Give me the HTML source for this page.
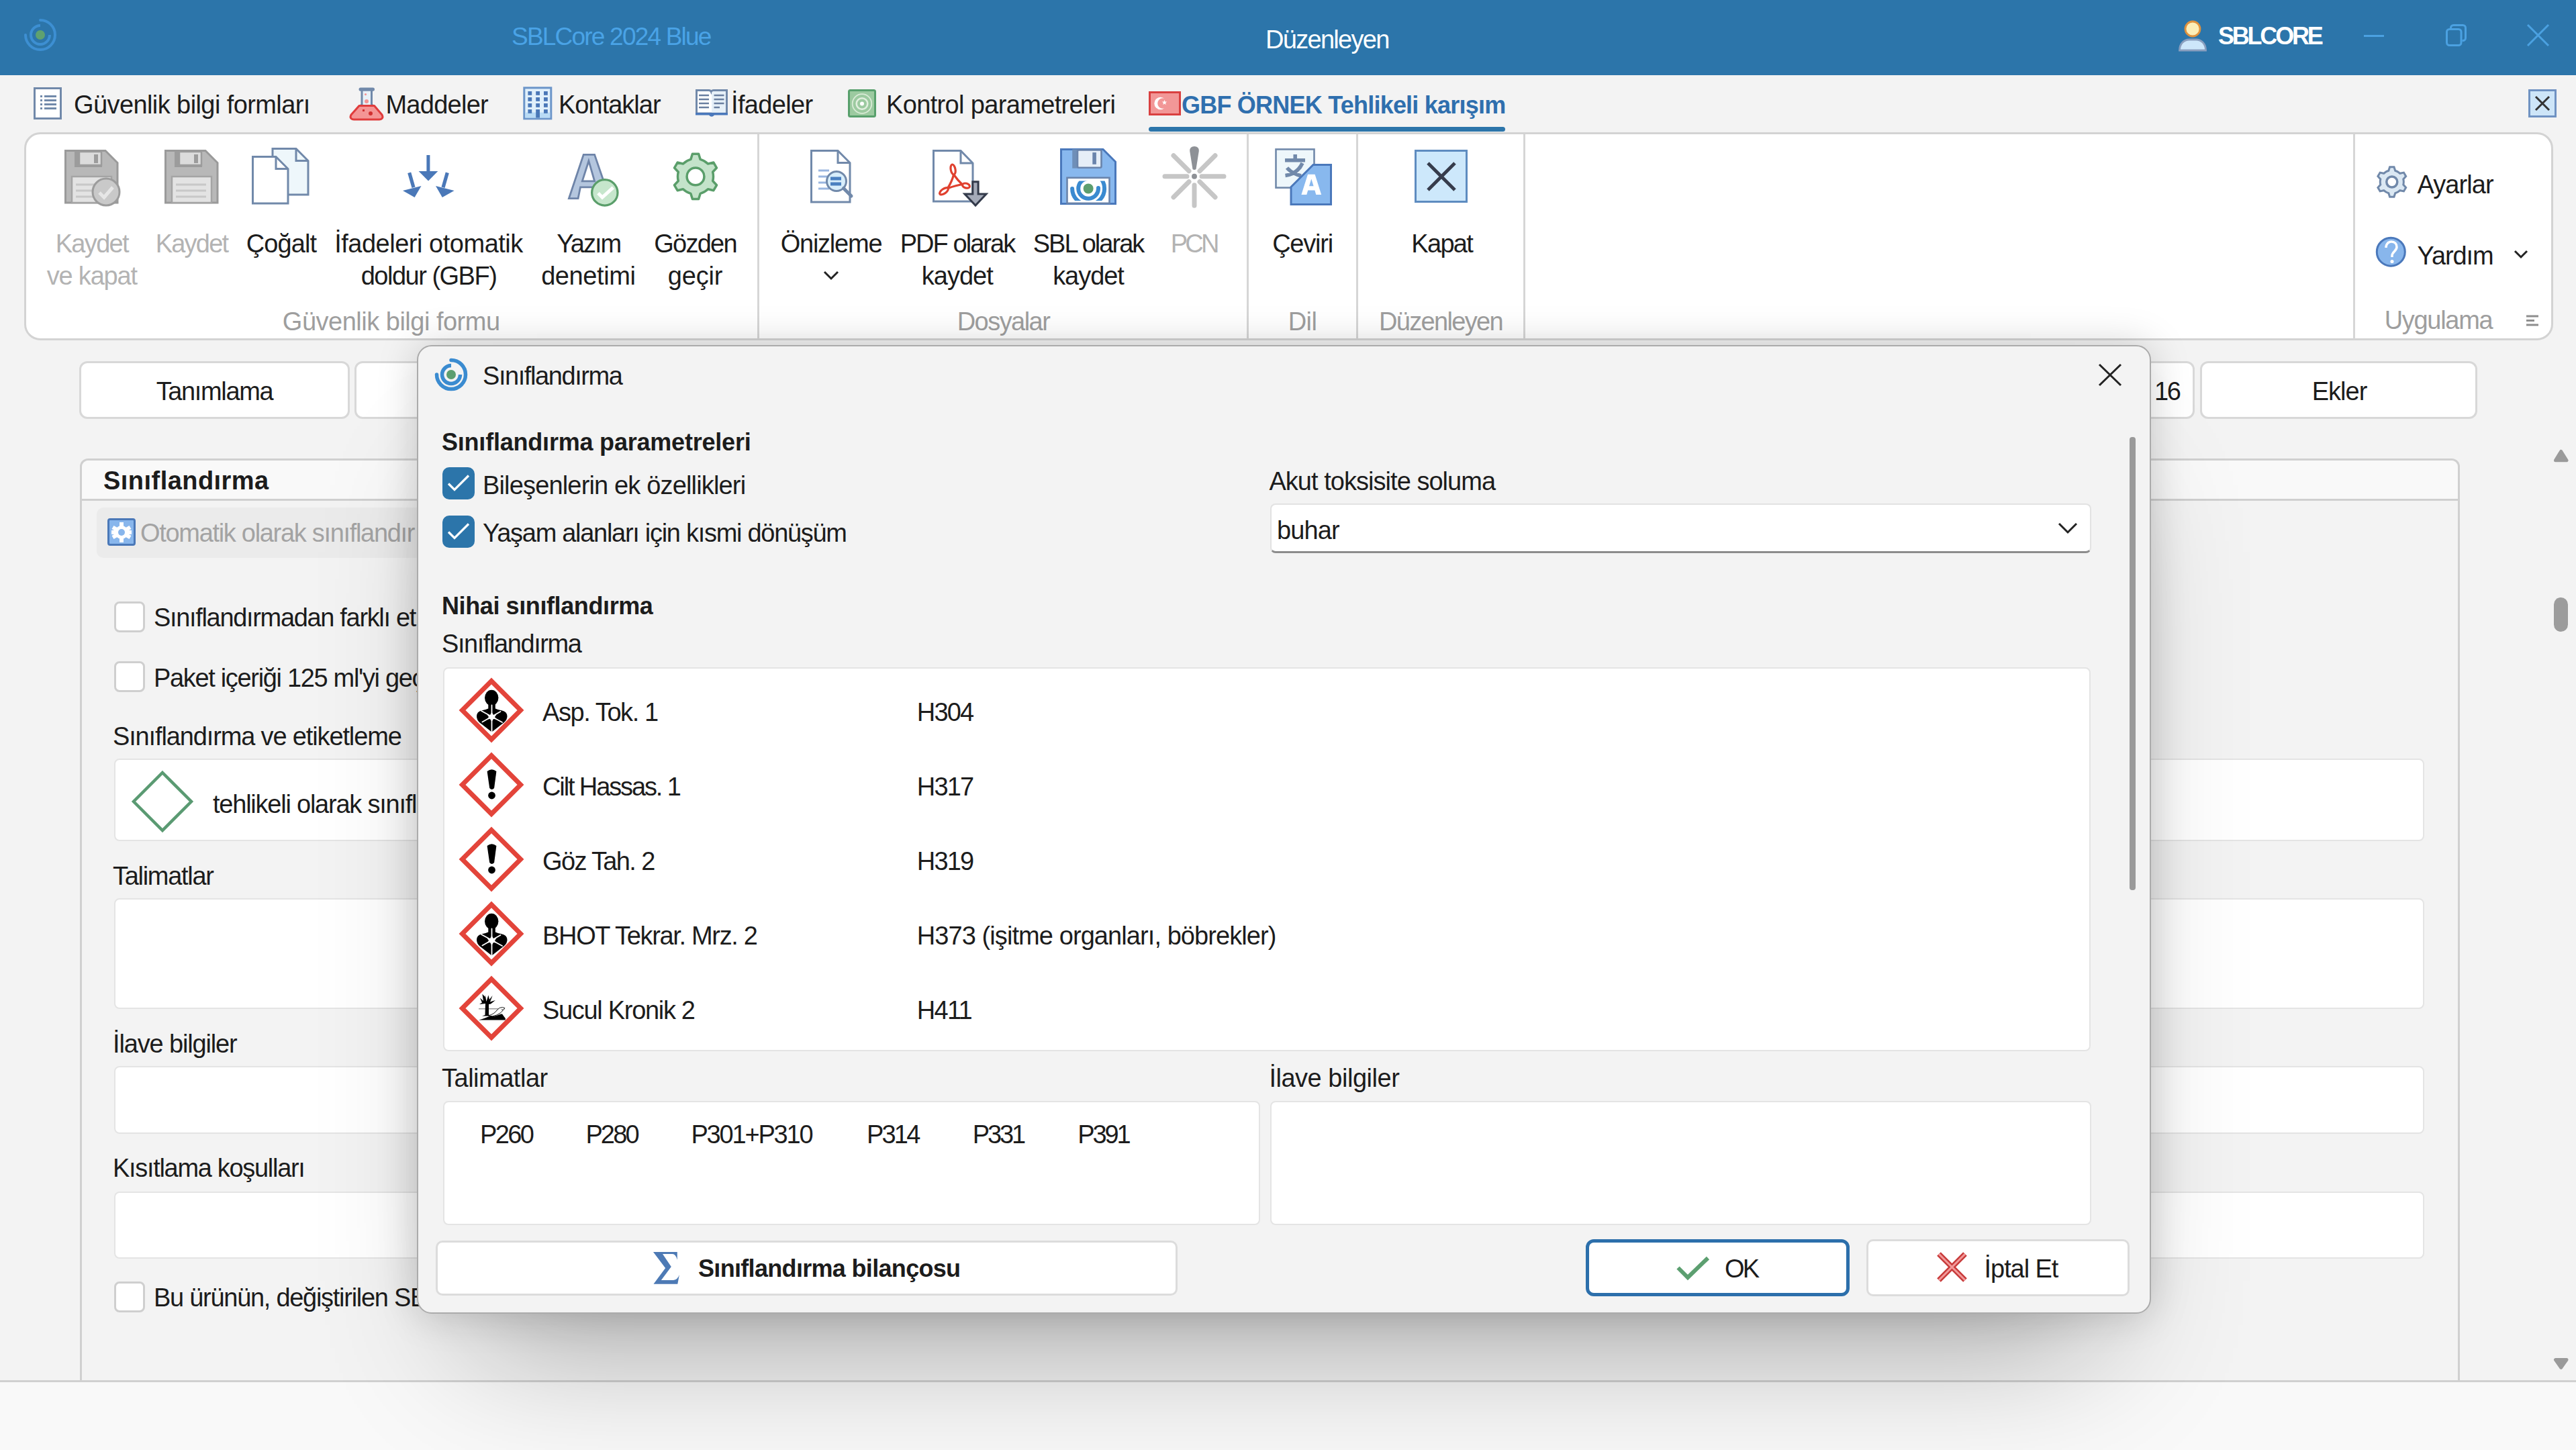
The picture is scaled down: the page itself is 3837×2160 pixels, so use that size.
<!DOCTYPE html>
<html><head><meta charset="utf-8"><title>SBLCore</title>
<style>
*{margin:0;padding:0;box-sizing:border-box}
html,body{width:3837px;height:2160px;overflow:hidden;background:#f3f3f3;font-family:"Liberation Sans",sans-serif;position:relative}
.a{position:absolute}
.t{position:absolute;white-space:pre;line-height:1;font-family:"Liberation Sans",sans-serif}
svg{position:absolute;overflow:visible}
.box{position:absolute;background:#fff;border:2px solid #e4e4e4;border-radius:8px}
.sep{position:absolute;top:200px;width:3px;height:305px;background:#d6d6d6}
</style></head><body>

<!-- ===== TITLE BAR ===== -->
<div class="a" style="left:0;top:0;width:3837px;height:112px;background:#2c75aa"></div>
<svg style="left:0;top:0" width="120" height="112" viewBox="0 0 120 112">
  <path d="M60 30 A22 22 0 1 1 38 52" fill="none" stroke="#3d8fd2" stroke-width="4" stroke-linecap="round"/>
  <path d="M60 38 A14 14 0 1 0 74 52" fill="none" stroke="#3d8fd2" stroke-width="4" stroke-linecap="butt"/>
  <circle cx="60" cy="52" r="7" fill="#5fa170"/>
</svg>
<!-- user icon -->
<svg style="left:3240px;top:28px" width="52" height="52" viewBox="0 0 52 52">
  <circle cx="26" cy="15" r="11" fill="#fdeeb8" stroke="#e0923e" stroke-width="2.8"/>
  <path d="M6.5 47 C6.5 37 13 31 21 31 H31 C39 31 45.5 37 45.5 47 Z" fill="#cde7fb" stroke="#8a9fbf" stroke-width="2.8"/>
</svg>
<!-- window controls -->
<div class="a" style="left:3521px;top:52px;width:30px;height:3px;background:#4ba1e1"></div>
<svg style="left:3640px;top:34px" width="40" height="40" viewBox="0 0 40 40">
  <rect x="4.5" y="9.5" width="21.5" height="24" rx="4" fill="none" stroke="#4ba1e1" stroke-width="3"/>
  <path d="M10.5 8.5 V7.5 a4 4 0 0 1 4-4 H28.5 a4 4 0 0 1 4 4 V22.5 a4 4 0 0 1 -4 4 H27.5" fill="none" stroke="#4ba1e1" stroke-width="3"/>
</svg>
<svg style="left:3762px;top:34px" width="40" height="40" viewBox="0 0 40 40">
  <path d="M3 3 L34 34 M34 3 L3 34" stroke="#4ba1e1" stroke-width="3" fill="none"/>
</svg>

<!-- ===== TAB ROW ===== -->
<svg style="left:50px;top:130px" width="44" height="50" viewBox="0 0 44 50">
  <rect x="1.5" y="1.5" width="39" height="45" fill="#fff" stroke="#7189aa" stroke-width="3"/>
  <g fill="#7189aa"><rect x="10" y="12" width="3" height="3"/><rect x="10" y="18" width="3" height="3"/><rect x="10" y="24" width="3" height="3"/><rect x="10" y="30" width="3" height="3"/>
  <rect x="16" y="12" width="18" height="3"/><rect x="16" y="18" width="18" height="3"/><rect x="16" y="24" width="18" height="3"/><rect x="16" y="30" width="18" height="3"/></g>
</svg>
<svg style="left:521px;top:130px" width="50" height="50" viewBox="0 0 50 50">
  <path d="M13.5 3 Q13.5 0.5 16 0.5 H34.5 Q37 0.5 37 3 Q37 5.7 34.5 5.7 H34 V25 L37 27.5 H13.5 L16.5 25 V5.7 H16 Q13.5 5.7 13.5 3 Z" fill="#7189aa"/>
  <rect x="19.5" y="5.7" width="11.5" height="21.5" fill="#e8f1f8"/>
  <circle cx="23.5" cy="10.6" r="1.6" fill="#f49595"/><circle cx="25" cy="21" r="3" fill="#f49595"/>
  <path d="M14 27.5 H36.5 L48 41 Q50 44.5 48 46.5 Q46.5 48 44 48 H6 Q3.5 48 2 46.5 Q0 44.5 2 41 Z" fill="#f49595" stroke="#e03c3c" stroke-width="3" stroke-linejoin="round"/>
  <rect x="19" y="33" width="3" height="3" fill="#d03030"/><circle cx="31" cy="39" r="3" fill="#d03030"/>
</svg>
<svg style="left:779px;top:129px" width="44" height="50" viewBox="0 0 44 50">
  <rect x="1.8" y="1.8" width="40" height="46" fill="#e0f0fb" stroke="#6b95c9" stroke-width="3"/>
  <rect x="3.3" y="38.5" width="37" height="8" fill="#b9dbf5"/>
  <g fill="#4a78b8"><rect x="7.4" y="7" width="5.8" height="5.8"/><rect x="19.2" y="7" width="5.8" height="5.8"/><rect x="31" y="7" width="5.8" height="5.8"/>
  <rect x="7.4" y="16" width="5.8" height="5.8"/><rect x="19.2" y="16" width="5.8" height="5.8"/><rect x="31" y="16" width="5.8" height="5.8"/>
  <rect x="7.4" y="25" width="5.8" height="5.8"/><rect x="19.2" y="25" width="5.8" height="5.8"/><rect x="31" y="25" width="5.8" height="5.8"/>
  <rect x="7.4" y="34" width="5.8" height="5.8"/><rect x="19.2" y="34" width="5.8" height="12.5"/><rect x="31" y="34" width="5.8" height="5.8"/></g>
</svg>
<svg style="left:1035px;top:132px" width="50" height="44" viewBox="0 0 50 44">
  <path d="M2.5 2.5 H21 Q23.5 2.5 24.5 5 Q25.5 2.5 28 2.5 H47.5 V37 H2.5 Z" fill="#fff" stroke="#7189aa" stroke-width="3"/>
  <path d="M25 6 Q26 4 28 4 H46 V35.5 H25 Z" fill="#e6f0f8"/>
  <path d="M1 36 H49 V39.5 H29 Q25 44 21 39.5 H1 Z" fill="#4a78bb"/>
  <g stroke="#6a7fa0" stroke-width="2.6"><path d="M6 10 H21 M6 16 H21 M6 22 H21 M6 28 H21 M28.5 10 H43.5 M28.5 16 H43.5 M28.5 22 H43.5 M28.5 28 H37"/></g>
</svg>
<svg style="left:1263px;top:133px" width="42" height="42" viewBox="0 0 42 42">
  <rect x="1.5" y="1.5" width="39" height="39" rx="2" fill="#9ccaa0" stroke="#58a06c" stroke-width="3"/>
  <circle cx="21" cy="21.5" r="14.3" fill="none" stroke="#eef6e8" stroke-width="1.8" opacity="0.75"/><circle cx="21" cy="21.5" r="8.3" fill="none" stroke="#f2f8ee" stroke-width="2.6" opacity="0.8"/><circle cx="21" cy="21.5" r="3" fill="#fff"/>
</svg>
<svg style="left:1711px;top:136px" width="48" height="36" viewBox="0 0 48 36">
  <rect x="1.5" y="1.5" width="45" height="33" fill="#f29797" stroke="#d94040" stroke-width="3"/>
  <circle cx="17.5" cy="18" r="9.2" fill="#fff"/><circle cx="21" cy="18" r="7.8" fill="#f29797"/>
  <path d="M23.5 12.8 l1 2.6 2.7 0.2 -2.1 1.7 0.7 2.7 -2.3-1.5 -2.3 1.5 0.7-2.7 -2.1-1.7 2.7-0.2z" fill="#fff"/>
</svg>
<div class="a" style="left:1711px;top:189px;width:531px;height:7px;border-radius:4px;background:#2c75aa"></div>
<!-- tab close -->
<div class="a" style="left:3766px;top:133px;width:42px;height:42px;background:#cde5f8;border:3px solid #6f92c2"></div>
<svg style="left:3766px;top:133px" width="42" height="42" viewBox="0 0 42 42">
  <path d="M11 11 L31 31 M31 11 L11 31" stroke="#333" stroke-width="3"/>
</svg>

<!-- ===== RIBBON ===== -->
<div class="a" style="left:36px;top:197px;width:3767px;height:310px;background:#fff;border:3px solid #d3d3d3;border-radius:24px"></div>
<div class="sep" style="left:1128px"></div>
<div class="sep" style="left:1857px"></div>
<div class="sep" style="left:2020px"></div>
<div class="sep" style="left:2269px"></div>
<div class="sep" style="left:3505px"></div>
<!-- Kaydet ve kapat -->
<svg style="left:96px;top:223px" width="90" height="90" viewBox="0 0 90 90">
  <path d="M1.5 1.5 H61 L79 19.5 V79 H1.5 Z" fill="#b8b8b8" stroke="#9a9a9a" stroke-width="3"/>
  <rect x="15" y="3" width="41" height="23" fill="#9c9c9c"/><rect x="22" y="3" width="33" height="20" fill="#dcdcdc" stroke="#9c9c9c" stroke-width="2.5"/><rect x="44" y="7" width="6" height="13" fill="#9c9c9c"/>
  <rect x="11" y="40" width="59" height="39" fill="#e3e3e3" stroke="#a4a4a4" stroke-width="2.5"/>
  <path d="M17 52 H62 M17 61 H62 M17 70 H62" stroke="#c8c8c8" stroke-width="3"/>
  <circle cx="62" cy="63" r="20" fill="#c9c9c9" stroke="#9c9c9c" stroke-width="3"/>
  <path d="M52 64 L59 71 L72 56" fill="none" stroke="#e6e6e6" stroke-width="5"/>
</svg>
<!-- Kaydet -->
<svg style="left:245px;top:223px" width="90" height="90" viewBox="0 0 90 90">
  <path d="M1.5 1.5 H61 L79 19.5 V79 H1.5 Z" fill="#b8b8b8" stroke="#9a9a9a" stroke-width="3"/>
  <rect x="15" y="3" width="41" height="23" fill="#9c9c9c"/><rect x="22" y="3" width="33" height="20" fill="#dcdcdc" stroke="#9c9c9c" stroke-width="2.5"/><rect x="44" y="7" width="6" height="13" fill="#9c9c9c"/>
  <rect x="11" y="40" width="59" height="39" fill="#e3e3e3" stroke="#a4a4a4" stroke-width="2.5"/>
  <path d="M17 52 H62 M17 61 H62 M17 70 H62" stroke="#c8c8c8" stroke-width="3"/>
</svg>
<!-- Cogalt -->
<svg style="left:375px;top:220px" width="90" height="90" viewBox="0 0 90 90">
  <path d="M31 1.5 H66 L84 19.5 V70 H31 Z" fill="#eef7fb" stroke="#7189aa" stroke-width="3"/>
  <path d="M66 1.5 V19.5 H84" fill="none" stroke="#7189aa" stroke-width="3"/>
  <path d="M1.5 13.5 H36 L54 31.5 V83 H1.5 Z" fill="#fff" stroke="#7189aa" stroke-width="3"/>
  <path d="M36 13.5 V31.5 H54" fill="none" stroke="#7189aa" stroke-width="3"/>
</svg>
<!-- Ifadeleri otomatik doldur -->
<svg style="left:595px;top:228px" width="90" height="72" viewBox="0 0 90 72">
  <g fill="#4a78b8">
    <rect x="40.4" y="3" width="5" height="25"/><path d="M28.6 27 H57.3 L43 41.5 Z"/>
    <path d="M12.2 30 L17.2 28.6 L23.5 50.5 L18.5 52 Z"/><path d="M5 56 L32.5 49 L22.6 66 Z"/>
    <path d="M73.8 30 L68.8 28.6 L62.5 50.5 L67.5 52 Z"/><path d="M81.6 56 L54 49 L63.8 66 Z"/>
  </g>
</svg>
<!-- Yazim denetimi -->
<svg style="left:845px;top:228px" width="82" height="84" viewBox="0 0 82 84">
  <path d="M24.2 2.4 H40.6 L63 67.6 H49 L44.5 50.8 H19.5 L16.1 67.6 H2.4 Z M31.9 11.7 L22.3 41.8 H40.6 Z" fill="#b4c6de" stroke="#6e84a8" stroke-width="2.8" stroke-linejoin="miter"/>
  <circle cx="55.8" cy="58.9" r="19.2" fill="#c6e6cc" stroke="#5a9e6a" stroke-width="3.2"/>
  <path d="M46 59.8 L52.1 66 L68.3 51.3" fill="none" stroke="#fff" stroke-width="5"/>
</svg>
<!-- Gozden gecir gear -->
<svg style="left:995px;top:222px" width="82" height="82" viewBox="0 0 82 82">
  <g transform="translate(41 40.9)">
  <path id="g6" d="M-7.11 -25.53 L-4.59 -33.69 L4.59 -33.69 L7.11 -25.53 A26.5 26.5 0 0 1 18.55 -18.92 L26.88 -20.82 L31.47 -12.87 L25.66 -6.60 A26.5 26.5 0 0 1 25.66 6.60 L31.47 12.87 L26.88 20.82 L18.55 18.92 A26.5 26.5 0 0 1 7.11 25.53 L4.59 33.69 L-4.59 33.69 L-7.11 25.53 A26.5 26.5 0 0 1 -18.55 18.92 L-26.88 20.82 L-31.47 12.87 L-25.66 6.60 A26.5 26.5 0 0 1 -25.66 -6.60 L-31.47 -12.87 L-26.88 -20.82 L-18.55 -18.92 A26.5 26.5 0 0 1 -7.11 -25.53 Z" fill="#c4e3ca" stroke="#5a9e6a" stroke-width="3.5" stroke-linejoin="round"/>
  <circle r="12.9" fill="#fff" stroke="#5a9e6a" stroke-width="3.5"/>
  </g>
</svg>
<!-- Onizleme -->
<svg style="left:1207px;top:223px" width="70" height="82" viewBox="0 0 70 82">
  <path d="M1.5 1.5 H41 L59 19.5 V78 H1.5 Z" fill="#fff" stroke="#7189aa" stroke-width="3"/>
  <path d="M41 1.5 V19.5 H59" fill="none" stroke="#7189aa" stroke-width="3"/>
  <path d="M12 31 H28 M12 40 H26 M12 49 H26 M12 58 H28" stroke="#9ab6e0" stroke-width="3"/>
  <circle cx="39" cy="47" r="14.5" fill="#d8eefb" stroke="#7189aa" stroke-width="3"/>
  <path d="M30 43 H46 M30 51 H46" stroke="#4a80c0" stroke-width="5"/>
  <path d="M49.5 57.5 L61 69" stroke="#7189aa" stroke-width="5" stroke-linecap="round"/>
</svg>
<!-- PDF -->
<svg style="left:1389px;top:223px" width="84" height="88" viewBox="0 0 84 88">
  <path d="M1.5 1.5 H42 L60 20 V77 H1.5 Z" fill="#fff" stroke="#7189aa" stroke-width="3"/>
  <path d="M42 1.5 V20 H60" fill="none" stroke="#7189aa" stroke-width="3"/>
  <g fill="none" stroke="#e0402e" stroke-width="3.2">
    <ellipse cx="30.6" cy="29.5" rx="3.4" ry="7.6" transform="rotate(-10 30.6 29.5)"/>
    <ellipse cx="17" cy="61.8" rx="7.4" ry="3.4" transform="rotate(-35 17 61.8)"/>
    <ellipse cx="50" cy="53.6" rx="5.6" ry="3.4" transform="rotate(15 50 53.6)"/>
    <path d="M31.6 37 C29.5 45 26 52 22.6 57.2 M23 57.5 C31 54.5 38 52.5 45 51.5 M45 52.5 C40 48 35 42 31.6 37"/>
  </g>
  <path d="M59.8 47.7 H68.1 V66 H80 L64 83 L48 66 H59.8 Z" fill="#a4aab8" stroke="#333a4a" stroke-width="3" stroke-linejoin="miter"/>
</svg>
<!-- SBL floppy -->
<svg style="left:1578px;top:220px" width="86" height="86" viewBox="0 0 86 86">
  <defs><clipPath id="sblclip"><rect x="12" y="49.4" width="62" height="29.5"/></clipPath></defs>
  <path d="M2.5 2.5 H65 L83.5 21 V83.5 H2.5 Z" fill="#88b8ee" stroke="#4a78bb" stroke-width="3"/>
  <rect x="19.2" y="2.5" width="10" height="28.2" fill="#6f8fb8"/>
  <rect x="27" y="3.5" width="35.5" height="26.2" rx="2" fill="#e6eef7" stroke="#6a84ab" stroke-width="2.6"/>
  <rect x="49.3" y="7.1" width="5.6" height="17.7" fill="#6a84ab"/>
  <rect x="11.5" y="44.8" width="63" height="38" fill="#fff" stroke="#6a84ab" stroke-width="2.6"/>
  <g clip-path="url(#sblclip)" fill="none" stroke="#3a8ad0" stroke-width="6" stroke-linecap="round">
    <path d="M43.1 36.9 A24 24 0 1 1 19.1 60.9"/>
    <path d="M43.1 46 A14.9 14.9 0 1 0 58 59.9"/>
  </g>
  <circle cx="43.1" cy="60.9" r="7.5" fill="#5c9e6f"/>
</svg>
<!-- PCN -->
<svg style="left:1729px;top:213px" width="100" height="100" viewBox="0 0 100 100">
  <g stroke="#c6c6c6" stroke-width="7" stroke-linecap="round" transform="translate(50 49.7)">
    <path d="M0 13 V43.5 M11 0 H44 M-11 0 H-44"/>
    <path d="M8 8 L31 31 M-8 8 L-31 31 M8 -8 L31 -31 M-8 -8 L-31 -31"/>
  </g>
  <path d="M43.2 12 Q43 5 50 5 Q57 5 56.8 12 L52.5 39 Q50 41 47.5 39 Z" fill="#8e9196"/>
  <circle cx="50" cy="49.7" r="4" fill="#8e9196"/>
</svg>
<!-- Ceviri -->
<svg style="left:1898px;top:220px" width="88" height="88" viewBox="0 0 88 88">
  <rect x="2.5" y="2.4" width="57" height="57.2" fill="#eef7fb" stroke="#7189aa" stroke-width="2.6"/>
  <g stroke="#7189aa" stroke-width="5.5" fill="none"><path d="M16 18.8 H46 M31.2 10 V18.8 M19 30 C25 37 32 40 40 42 M42 23 C37 34 28 40 16.5 41.5"/></g>
  <path d="M25 58.5 L58 25.5 H84.5 V84.5 H25 Z" fill="#88b8ee" stroke="#4a78bb" stroke-width="3"/>
  <path d="M40.4 70.1 L50 39.7 H60.6 L70.2 70.1 H62.3 L60.4 63.5 H50.2 L48.3 70.1 Z M52 57.3 H58.6 L55.3 46.5 Z" fill="#fff" fill-rule="evenodd"/>
</svg>
<!-- Kapat -->
<svg style="left:2107px;top:223px" width="80" height="80" viewBox="0 0 80 80">
  <rect x="1.5" y="1.5" width="76" height="76" fill="#cde8fb" stroke="#5e8cc0" stroke-width="3"/>
  <path d="M20 20 L60 60 M60 20 L20 60" stroke="#363c4c" stroke-width="5"/>
</svg>
<!-- Ayarlar gear -->
<svg style="left:3536px;top:244px" width="54" height="54" viewBox="0 0 54 54">
  <g transform="translate(26.8 27)">
  <path d="M-4.93 -16.79 L-3.19 -22.27 L3.19 -22.27 L4.93 -16.79 A17.5 17.5 0 0 1 12.07 -12.67 L17.69 -13.90 L20.88 -8.37 L17.01 -4.12 A17.5 17.5 0 0 1 17.01 4.12 L20.88 8.37 L17.69 13.90 L12.07 12.67 A17.5 17.5 0 0 1 4.93 16.79 L3.19 22.27 L-3.19 22.27 L-4.93 16.79 A17.5 17.5 0 0 1 -12.07 12.67 L-17.69 13.90 L-20.88 8.37 L-17.01 4.12 A17.5 17.5 0 0 1 -17.01 -4.12 L-20.88 -8.37 L-17.69 -13.90 L-12.07 -12.67 A17.5 17.5 0 0 1 -4.93 -16.79 Z" fill="#dbe8f3" stroke="#7189aa" stroke-width="3" stroke-linejoin="miter"/>
  <circle r="8" fill="#fff" stroke="#7189aa" stroke-width="3.5"/>
  </g>
</svg>
<!-- Yardim -->
<svg style="left:3536px;top:350px" width="52" height="52" viewBox="0 0 52 52">
  <circle cx="25.3" cy="25.2" r="21" fill="#88b6ec" stroke="#4a78bb" stroke-width="3"/>
  <path d="M18 19 C18 13 22 10 26 10 C31 10 34 13 34 18 C34 24 27 25 27 31 V33" fill="none" stroke="#fff" stroke-width="3.5"/>
  <circle cx="27" cy="39.5" r="2.6" fill="#fff"/>
</svg>
<svg style="left:3743px;top:370px" width="24" height="18" viewBox="0 0 24 18"><path d="M3 4 L12 13 L21 4" fill="none" stroke="#222" stroke-width="3"/></svg>
<svg style="left:3760px;top:466px" width="24" height="22" viewBox="0 0 24 22"><path d="M3 5 H21 M3 11.5 H15 M3 18 H21" stroke="#8e8e8e" stroke-width="2.8"/></svg>
<!-- Onizleme chevron -->
<svg style="left:1225px;top:402px" width="26" height="18" viewBox="0 0 26 18"><path d="M3 3 L13 13 L23 3" fill="none" stroke="#222" stroke-width="3"/></svg>


<!-- ===== BACKGROUND CONTENT ===== -->
<div class="box" style="left:118px;top:538px;width:403px;height:86px;border-color:#d8d8d8;border-width:3px;border-radius:12px"></div>
<div class="box" style="left:528px;top:538px;width:403px;height:86px;border-color:#d8d8d8;border-width:3px;border-radius:12px"></div>
<div class="box" style="left:2869px;top:538px;width:400px;height:86px;border-color:#d8d8d8;border-width:3px;border-radius:12px"></div>
<div class="box" style="left:3277px;top:538px;width:413px;height:86px;border-color:#d8d8d8;border-width:3px;border-radius:12px"></div>

<div class="a" style="left:119px;top:683px;width:3545px;height:1400px;border:3px solid #d0d0d0;border-radius:12px;background:#f3f3f3"></div>
<div class="a" style="left:122px;top:686px;width:3539px;height:60px;background:#f9f9f9;border-radius:10px 10px 0 0;border-bottom:3px solid #d0d0d0"></div>
<div class="a" style="left:144px;top:756px;width:800px;height:75px;background:#ebebeb;border-radius:10px"></div>
<svg style="left:160px;top:772px" width="43" height="42" viewBox="0 0 43 42">
  <rect x="1.5" y="1.5" width="39" height="38" rx="2.5" fill="#88b6ec" stroke="#4a78b8" stroke-width="3"/>
  <g fill="#fff"><circle cx="21" cy="21" r="10"/>
  <rect x="18" y="6" width="6" height="30"/><rect x="6" y="18" width="30" height="6"/>
  <rect x="18" y="6" width="6" height="30" transform="rotate(60 21 21)"/><rect x="18" y="6" width="6" height="30" transform="rotate(-60 21 21)"/></g>
  <circle cx="21" cy="21" r="5" fill="#88b6ec"/>
</svg>
<div class="box" style="left:170px;top:896px;width:46px;height:46px;border:3px solid #cfcfcf"></div>
<div class="box" style="left:170px;top:985px;width:46px;height:46px;border:3px solid #cfcfcf"></div>
<div class="box" style="left:170px;top:1130px;width:3441px;height:123px"></div>
<svg style="left:196px;top:1148px" width="92" height="92" viewBox="0 0 92 92">
  <path d="M46 3 L89 46 L46 89 L3 46 Z" fill="none" stroke="#5a9a72" stroke-width="4.5"/>
</svg>
<div class="box" style="left:170px;top:1338px;width:3441px;height:165px"></div>
<div class="box" style="left:170px;top:1588px;width:3441px;height:101px"></div>
<div class="box" style="left:170px;top:1775px;width:3441px;height:100px"></div>
<div class="box" style="left:170px;top:1909px;width:46px;height:46px;border:3px solid #cfcfcf"></div>
<!-- right scrollbar -->
<svg style="left:3800px;top:665px" width="30" height="28" viewBox="0 0 30 28"><path d="M14.7 7.5 L23 20.8 H6.5 Z" fill="#9a9a9a" stroke="#9a9a9a" stroke-width="5" stroke-linejoin="round"/></svg>
<div class="a" style="left:3804px;top:890px;width:21px;height:51px;border-radius:10.5px;background:#9c9c9c"></div>
<svg style="left:3800px;top:2012px" width="30" height="28" viewBox="0 0 30 28"><path d="M6.5 13.5 H23 L14.7 25.2 Z" fill="#9a9a9a" stroke="#9a9a9a" stroke-width="5" stroke-linejoin="round"/></svg>
<div class="t" style="left:762.0px;top:35.7px;font-size:37px;color:#4aa3e6;letter-spacing:-1.79px;">SBLCore 2024 Blue</div>
<div class="t" style="left:1885.0px;top:39.8px;font-size:38px;color:#ffffff;letter-spacing:-1.70px;">Düzenleyen</div>
<div class="t" style="left:3304.0px;top:36.2px;font-size:36px;color:#ffffff;font-weight:700;letter-spacing:-3.21px;">SBLCORE</div>
<div class="t" style="left:110.0px;top:136.8px;font-size:38px;color:#1c1c1c;letter-spacing:-0.59px;">Güvenlik bilgi formları</div>
<div class="t" style="left:574.4px;top:136.8px;font-size:38px;color:#1c1c1c;letter-spacing:-0.72px;">Maddeler</div>
<div class="t" style="left:832.0px;top:136.8px;font-size:38px;color:#1c1c1c;letter-spacing:-0.99px;">Kontaklar</div>
<div class="t" style="left:1089.0px;top:136.8px;font-size:38px;color:#1c1c1c;letter-spacing:-0.64px;">İfadeler</div>
<div class="t" style="left:1320.0px;top:136.8px;font-size:38px;color:#1c1c1c;letter-spacing:-0.65px;">Kontrol parametreleri</div>
<div class="t" style="left:1760.0px;top:138.5px;font-size:36px;color:#2f6fae;font-weight:700;letter-spacing:-0.78px;">GBF ÖRNEK Tehlikeli karışım</div>
<div class="t" style="left:-463.2px;width:1200px;text-align:center;top:344.4px;font-size:38px;color:#b3b3b3;letter-spacing:-1.69px;">Kaydet</div>
<div class="t" style="left:-463.2px;width:1200px;text-align:center;top:391.8px;font-size:38px;color:#b3b3b3;letter-spacing:-1.19px;">ve kapat</div>
<div class="t" style="left:-314.5px;width:1200px;text-align:center;top:344.4px;font-size:38px;color:#b3b3b3;letter-spacing:-1.78px;">Kaydet</div>
<div class="t" style="left:-181.1px;width:1200px;text-align:center;top:344.4px;font-size:38px;color:#1c1c1c;letter-spacing:-0.91px;">Çoğalt</div>
<div class="t" style="left:38.5px;width:1200px;text-align:center;top:344.4px;font-size:38px;color:#1c1c1c;letter-spacing:-0.48px;">İfadeleri otomatik</div>
<div class="t" style="left:38.5px;width:1200px;text-align:center;top:391.8px;font-size:38px;color:#1c1c1c;letter-spacing:-1.50px;">doldur (GBF)</div>
<div class="t" style="left:276.7px;width:1200px;text-align:center;top:344.4px;font-size:38px;color:#1c1c1c;letter-spacing:-2.04px;">Yazım</div>
<div class="t" style="left:276.3px;width:1200px;text-align:center;top:391.8px;font-size:38px;color:#1c1c1c;letter-spacing:-0.42px;">denetimi</div>
<div class="t" style="left:435.5px;width:1200px;text-align:center;top:344.4px;font-size:38px;color:#1c1c1c;letter-spacing:-1.74px;">Gözden</div>
<div class="t" style="left:435.5px;width:1200px;text-align:center;top:391.8px;font-size:38px;color:#1c1c1c;letter-spacing:-0.22px;">geçir</div>
<div class="t" style="left:638.0px;width:1200px;text-align:center;top:344.4px;font-size:38px;color:#1c1c1c;letter-spacing:-1.23px;">Önizleme</div>
<div class="t" style="left:826.0px;width:1200px;text-align:center;top:344.4px;font-size:38px;color:#1c1c1c;letter-spacing:-1.94px;">PDF olarak</div>
<div class="t" style="left:825.8px;width:1200px;text-align:center;top:391.8px;font-size:38px;color:#1c1c1c;letter-spacing:-0.95px;">kaydet</div>
<div class="t" style="left:1021.0px;width:1200px;text-align:center;top:344.4px;font-size:38px;color:#1c1c1c;letter-spacing:-1.98px;">SBL olarak</div>
<div class="t" style="left:1021.0px;width:1200px;text-align:center;top:391.8px;font-size:38px;color:#1c1c1c;letter-spacing:-1.05px;">kaydet</div>
<div class="t" style="left:1178.3px;width:1200px;text-align:center;top:344.4px;font-size:38px;color:#b3b3b3;letter-spacing:-3.66px;">PCN</div>
<div class="t" style="left:1340.0px;width:1200px;text-align:center;top:344.4px;font-size:38px;color:#1c1c1c;letter-spacing:-1.24px;">Çeviri</div>
<div class="t" style="left:1547.7px;width:1200px;text-align:center;top:344.4px;font-size:38px;color:#1c1c1c;letter-spacing:-1.73px;">Kapat</div>
<div class="t" style="left:-17.3px;width:1200px;text-align:center;top:459.8px;font-size:38px;color:#9e9e9e;letter-spacing:-0.50px;">Güvenlik bilgi formu</div>
<div class="t" style="left:894.5px;width:1200px;text-align:center;top:459.8px;font-size:38px;color:#9e9e9e;letter-spacing:-1.54px;">Dosyalar</div>
<div class="t" style="left:1340.0px;width:1200px;text-align:center;top:459.8px;font-size:38px;color:#9e9e9e;letter-spacing:-0.56px;">Dil</div>
<div class="t" style="left:1546.0px;width:1200px;text-align:center;top:459.8px;font-size:38px;color:#9e9e9e;letter-spacing:-1.65px;">Düzenleyen</div>
<div class="t" style="left:3032.0px;width:1200px;text-align:center;top:458.3px;font-size:38px;color:#9e9e9e;letter-spacing:-1.30px;">Uygulama</div>
<div class="t" style="left:3600.5px;top:255.8px;font-size:38px;color:#1c1c1c;letter-spacing:-0.93px;">Ayarlar</div>
<div class="t" style="left:3600.5px;top:361.6px;font-size:38px;color:#1c1c1c;letter-spacing:-1.09px;">Yardım</div>
<div class="t" style="left:-280.5px;width:1200px;text-align:center;top:563.8px;font-size:38px;color:#1c1c1c;letter-spacing:-1.35px;">Tanımlama</div>
<div class="t" style="left:3209.0px;top:563.8px;font-size:38px;color:#1c1c1c;letter-spacing:-2.31px;">16</div>
<div class="t" style="left:2884.5px;width:1200px;text-align:center;top:563.8px;font-size:38px;color:#1c1c1c;letter-spacing:-0.98px;">Ekler</div>
<div class="t" style="left:154.0px;top:697.4px;font-size:38px;color:#1c1c1c;font-weight:700;letter-spacing:0.46px;">Sınıflandırma</div>
<div class="t" style="left:209.0px;top:774.8px;font-size:38px;color:#a3a3a3;letter-spacing:-1.31px;">Otomatik olarak sınıflandır</div>
<div class="t" style="left:229.0px;top:901.3px;font-size:38px;color:#1c1c1c;letter-spacing:-1.33px;">Sınıflandırmadan farklı etiketleme</div>
<div class="t" style="left:229.0px;top:990.8px;font-size:38px;color:#1c1c1c;letter-spacing:-1.33px;">Paket içeriği 125 ml'yi geçmiyor</div>
<div class="t" style="left:168.0px;top:1077.5px;font-size:38px;color:#1c1c1c;letter-spacing:-1.14px;">Sınıflandırma ve etiketleme</div>
<div class="t" style="left:317.0px;top:1178.6px;font-size:38px;color:#1c1c1c;letter-spacing:-1.23px;">tehlikeli olarak sınıflandırılmamıştır</div>
<div class="t" style="left:168.0px;top:1285.8px;font-size:38px;color:#1c1c1c;letter-spacing:-1.30px;">Talimatlar</div>
<div class="t" style="left:168.0px;top:1536.3px;font-size:38px;color:#1c1c1c;letter-spacing:-1.15px;">İlave bilgiler</div>
<div class="t" style="left:168.0px;top:1720.8px;font-size:38px;color:#1c1c1c;letter-spacing:-1.31px;">Kısıtlama koşulları</div>
<div class="t" style="left:229.0px;top:1913.8px;font-size:38px;color:#1c1c1c;letter-spacing:-1.28px;">Bu ürünün, değiştirilen SBL ile değiştirilmesi</div>
<!-- bottom strip -->
<div class="a" style="left:0;top:2056px;width:3837px;height:104px;background:#f9f9f9;border-top:3px solid #d0d0d0"></div>

<!-- ===== DIALOG ===== -->
<div class="a" style="left:621px;top:514px;width:2583px;height:1443px;background:#f3f3f3;border:2px solid #ababab;border-radius:22px;box-shadow:0 0 60px rgba(0,0,0,0.18), 0 130px 200px -80px rgba(0,0,0,0.3)"></div>
<svg style="left:640px;top:526px" width="64" height="64" viewBox="0 0 64 64">
  <path d="M32 10.5 A21.5 21.5 0 1 1 10.5 32" fill="none" stroke="#3a8bd0" stroke-width="5.5" stroke-linecap="round"/>
  <path d="M32 18.5 A13.5 13.5 0 1 0 45.5 32" fill="none" stroke="#3a8bd0" stroke-width="5.5"/>
  <circle cx="32" cy="32" r="7" fill="#5c9e6f"/>
</svg>
<svg style="left:3124px;top:540px" width="40" height="40" viewBox="0 0 40 40">
  <path d="M3 3 L35 34 M35 3 L3 34" stroke="#222" stroke-width="3" fill="none"/>
</svg>
<div class="a" style="left:659px;top:696px;width:48px;height:48px;background:#2c75aa;border-radius:10px"></div>
<div class="a" style="left:659px;top:768px;width:48px;height:48px;background:#2c75aa;border-radius:10px"></div>
<svg style="left:660px;top:696px" width="47" height="47" viewBox="0 0 47 47"><path d="M8 24.5 L17 33.5 L38 12.5" fill="none" stroke="#fff" stroke-width="3.3"/></svg>
<svg style="left:660px;top:768px" width="47" height="47" viewBox="0 0 47 47"><path d="M8 24.5 L17 33.5 L38 12.5" fill="none" stroke="#fff" stroke-width="3.3"/></svg>
<div class="box" style="left:1892px;top:750px;width:1223px;height:74px;border-color:#e2e2e2;border-bottom:3px solid #8c8c8c"></div>
<svg style="left:3064px;top:776px" width="32" height="22" viewBox="0 0 32 22"><path d="M3 4 L16 17 L29 4" fill="none" stroke="#222" stroke-width="3"/></svg>
<div class="box" style="left:660px;top:994px;width:2454px;height:572px"></div>
<svg width="0" height="0" style="left:0;top:0"><defs>
<path id="dia" d="M48 4.5 L91.5 48 L48 91.5 L4.5 48 Z" fill="#fff" stroke="#e3443a" stroke-width="7"/>
<g id="health">
  <ellipse cx="48.2" cy="29.5" rx="10.2" ry="11.8" fill="#000"/>
  <path d="M43.3 36 L43.3 45.5 Q40 47.2 34 48.2 Q26 50 26 57 Q26 62 30 66 L48.5 80.5 L67 66 Q71.5 62 71.5 57 Q71.5 50 63 48.2 Q57 47.2 53.8 45.5 L53.8 36 Z" fill="#000"/>
  <g stroke="#fff" stroke-width="1.8" stroke-linecap="round"><path d="M48.5 40.5 V80.5 M33 49 L64 66 M34.4 65.5 L61.5 50"/></g>
  <path d="M48.5 51 L51 55 L55.5 54.5 L53 58 L55.5 61.5 L51 61 L48.5 65 L46 61 L41.5 61.5 L44 58 L41.5 54.5 L46 55 Z" fill="#fff"/>
</g>
<g id="excl">
  <path d="M41.6 28 Q48.5 22.5 55.4 28 L52.1 53 Q48.5 57 45.2 53 Z" fill="#000"/>
  <circle cx="48.5" cy="64" r="5.4" fill="#000"/>
</g>
<g id="env">
  <path d="M29 48.8 H68" stroke="#999" stroke-width="1.4"/>
  <path d="M38.5 58 L39 41 L30 42 L34 39.5 L31 32.5 L36 37 L34.4 26.7 L38.5 31 L38.7 28.1 L40.5 38 L43.4 28.5 L45 35 L49.6 28.9 L46 38.5 L53.9 36.1 L47 41.5 L44 42 L44 57.5 L48 59.5 L34 59.5 Z" fill="#000"/>
  <path d="M29 65.6 Q40 62 45 60 Q53 60 58 58 Q62 56 64 56.5 L66.5 60 L68.8 63 L68.8 65.6 Z" fill="#000"/>
  <path d="M43 59 Q52 57 56 51 Q60 46 64.5 46.5 L67.8 47.6 L66 50 Q63 55 56 58 Q50 61 43 59 Z" fill="#fff" stroke="#000" stroke-width="0.9"/>
  <circle cx="64" cy="50" r="0.8" fill="#000"/>
</g>
</defs></svg>
<svg style="left:684px;top:1009.5px" width="96" height="96" viewBox="0 0 96 96"><use href="#dia"/><use href="#health"/></svg>
<svg style="left:684px;top:1120.5px" width="96" height="96" viewBox="0 0 96 96"><use href="#dia"/><use href="#excl"/></svg>
<svg style="left:684px;top:1231.5px" width="96" height="96" viewBox="0 0 96 96"><use href="#dia"/><use href="#excl"/></svg>
<svg style="left:684px;top:1343px" width="96" height="96" viewBox="0 0 96 96"><use href="#dia"/><use href="#health"/></svg>
<svg style="left:684px;top:1453.5px" width="96" height="96" viewBox="0 0 96 96"><use href="#dia"/><use href="#env"/></svg>

<div class="box" style="left:660px;top:1640px;width:1217px;height:185px"></div>
<div class="box" style="left:1892px;top:1640px;width:1223px;height:185px"></div>
<div class="a" style="left:3172px;top:651px;width:8.5px;height:675px;border-radius:4px;background:#9a9a9a"></div>
<div class="box" style="left:649px;top:1848px;width:1105px;height:82px;border-color:#dcdcdc;border-width:3px;border-radius:10px"></div>
<svg style="left:960px;top:1855px" width="70" height="70" viewBox="0 0 70 70">
  <path d="M13 10.1 H48.8 V21.7 Q46.5 13 41.5 13 H27 L39.8 31.9 L24.9 51.9 H43 Q49.5 51 51.9 43.9 L49.3 57.7 H13.5 L31.1 34 Z" fill="#4d7ab5"/>
</svg>
<div class="a" style="left:2362px;top:1846px;width:393px;height:85px;background:#fff;border:5px solid #2c6fab;border-radius:12px"></div>
<svg style="left:2496px;top:1870px" width="52" height="40" viewBox="0 0 52 40"><path d="M3.5 18.5 L18 33 L48 4" fill="none" stroke="#5c9f70" stroke-width="6"/></svg>
<div class="box" style="left:2780px;top:1846px;width:392px;height:85px;border-color:#dcdcdc;border-width:3px;border-radius:10px"></div>
<svg style="left:2882px;top:1863px" width="50" height="50" viewBox="0 0 50 50">
  <path d="M6 5 L45 44 M45 5 L6 44" stroke="#c83a3a" stroke-width="8"/>
  <path d="M6 5 L45 44 M45 5 L6 44" stroke="#f29a9a" stroke-width="3"/>
</svg>
<div class="t" style="left:719.0px;top:541.4px;font-size:38px;color:#1c1c1c;letter-spacing:-1.43px;">Sınıflandırma</div>
<div class="t" style="left:658.0px;top:641.0px;font-size:36px;color:#1c1c1c;font-weight:700;letter-spacing:-0.21px;">Sınıflandırma parametreleri</div>
<div class="t" style="left:719.0px;top:703.8px;font-size:38px;color:#1c1c1c;letter-spacing:-0.84px;">Bileşenlerin ek özellikleri</div>
<div class="t" style="left:719.0px;top:774.8px;font-size:38px;color:#1c1c1c;letter-spacing:-1.29px;">Yaşam alanları için kısmi dönüşüm</div>
<div class="t" style="left:1890.4px;top:697.8px;font-size:38px;color:#1c1c1c;letter-spacing:-0.96px;">Akut toksisite soluma</div>
<div class="t" style="left:1902.0px;top:771.3px;font-size:38px;color:#1c1c1c;letter-spacing:-0.91px;">buhar</div>
<div class="t" style="left:658.0px;top:884.5px;font-size:36px;color:#1c1c1c;font-weight:700;letter-spacing:-0.40px;">Nihai sınıflandırma</div>
<div class="t" style="left:658.0px;top:939.8px;font-size:38px;color:#1c1c1c;letter-spacing:-1.43px;">Sınıflandırma</div>
<div class="t" style="left:808.0px;top:1041.8px;font-size:38px;color:#1c1c1c;letter-spacing:-1.42px;">Asp. Tok. 1</div>
<div class="t" style="left:1365.8px;top:1041.8px;font-size:38px;color:#1c1c1c;letter-spacing:-1.80px;">H304</div>
<div class="t" style="left:808.0px;top:1152.6px;font-size:38px;color:#1c1c1c;letter-spacing:-2.12px;">Cilt Hassas. 1</div>
<div class="t" style="left:1365.8px;top:1152.6px;font-size:38px;color:#1c1c1c;letter-spacing:-1.80px;">H317</div>
<div class="t" style="left:808.0px;top:1263.8px;font-size:38px;color:#1c1c1c;letter-spacing:-1.64px;">Göz Tah. 2</div>
<div class="t" style="left:1365.8px;top:1263.8px;font-size:38px;color:#1c1c1c;letter-spacing:-1.80px;">H319</div>
<div class="t" style="left:808.0px;top:1374.8px;font-size:38px;color:#1c1c1c;letter-spacing:-1.33px;">BHOT Tekrar. Mrz. 2</div>
<div class="t" style="left:1365.8px;top:1374.8px;font-size:38px;color:#1c1c1c;letter-spacing:-0.92px;">H373 (işitme organları, böbrekler)</div>
<div class="t" style="left:808.0px;top:1485.8px;font-size:38px;color:#1c1c1c;letter-spacing:-1.31px;">Sucul Kronik 2</div>
<div class="t" style="left:1365.8px;top:1485.8px;font-size:38px;color:#1c1c1c;letter-spacing:-1.72px;">H411</div>
<div class="t" style="left:658.0px;top:1587.4px;font-size:38px;color:#1c1c1c;letter-spacing:-0.49px;">Talimatlar</div>
<div class="t" style="left:715.0px;top:1670.8px;font-size:38px;color:#1c1c1c;letter-spacing:-2.65px;">P260</div>
<div class="t" style="left:872.4px;top:1670.8px;font-size:38px;color:#1c1c1c;letter-spacing:-2.87px;">P280</div>
<div class="t" style="left:1029.4px;top:1670.8px;font-size:38px;color:#1c1c1c;letter-spacing:-2.18px;">P301+P310</div>
<div class="t" style="left:1291.0px;top:1670.8px;font-size:38px;color:#1c1c1c;letter-spacing:-2.82px;">P314</div>
<div class="t" style="left:1448.8px;top:1670.8px;font-size:38px;color:#1c1c1c;letter-spacing:-3.15px;">P331</div>
<div class="t" style="left:1605.3px;top:1670.8px;font-size:38px;color:#1c1c1c;letter-spacing:-3.12px;">P391</div>
<div class="t" style="left:1890.4px;top:1586.5px;font-size:38px;color:#1c1c1c;letter-spacing:-0.48px;">İlave bilgiler</div>
<div class="t" style="left:1040.0px;top:1871.5px;font-size:36px;color:#1c1c1c;font-weight:700;letter-spacing:-0.68px;">Sınıflandırma bilançosu</div>
<div class="t" style="left:2569.0px;top:1871.3px;font-size:38px;color:#1c1c1c;letter-spacing:-2.92px;">OK</div>
<div class="t" style="left:2955.6px;top:1870.8px;font-size:38px;color:#1c1c1c;letter-spacing:-1.08px;">İptal Et</div>
</body></html>
